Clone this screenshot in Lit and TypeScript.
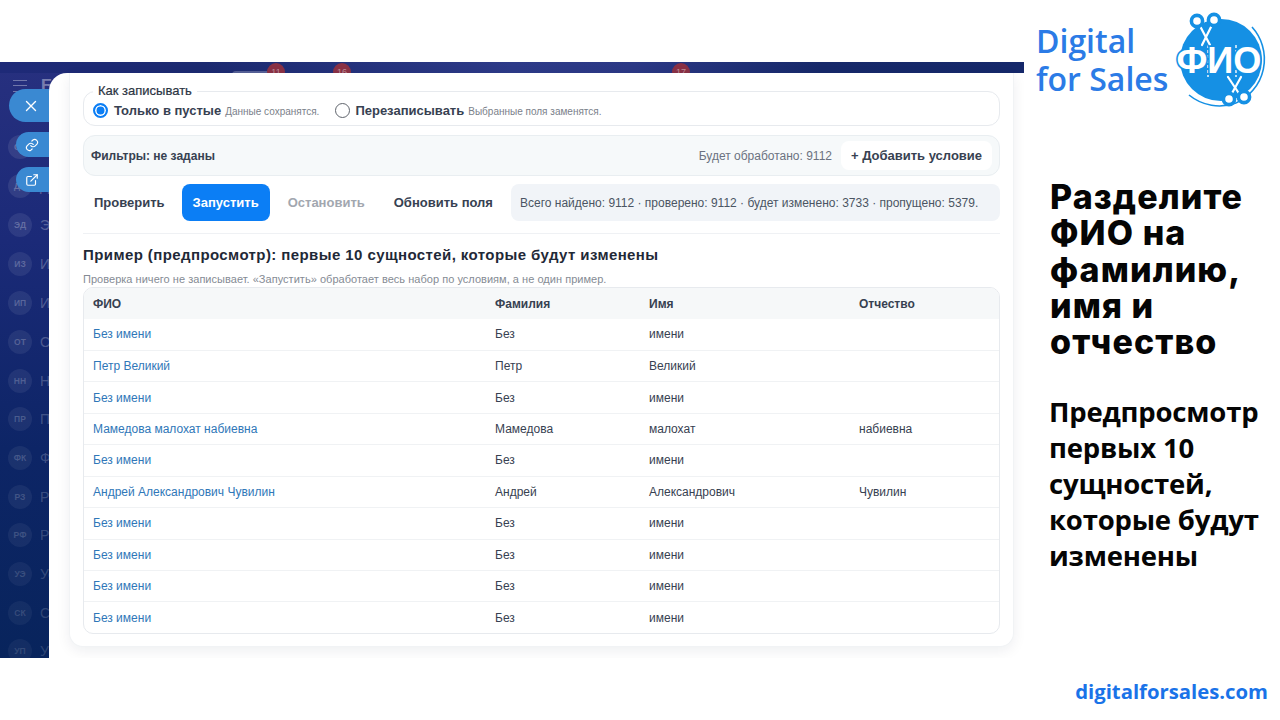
import { LitElement, html, css, svg } from 'lit';
import { customElement } from 'lit/decorators.js';

const navItems = [
  ['СД', 'Сделки', 147],
  ['ДА', 'Данные', 186],
  ['ЭД', 'Экспорт', 225],
  ['ИЗ', 'Импорт', 264],
  ['ИП', 'История', 303],
  ['ОТ', 'Отчёты', 342],
  ['НН', 'Настройки', 381],
  ['ПР', 'Проекты', 419],
  ['ФК', 'Формы', 458],
  ['РЗ', 'Разделы', 497],
  ['РФ', 'Рефералы', 535],
  ['УЭ', 'Услуги', 574],
  ['СК', 'Склад', 613],
  ['УП', 'Управление', 651],
];

const rows = [
  ['Без имени', 'Без', 'имени', ''],
  ['Петр Великий', 'Петр', 'Великий', ''],
  ['Без имени', 'Без', 'имени', ''],
  ['Мамедова малохат набиевна', 'Мамедова', 'малохат', 'набиевна'],
  ['Без имени', 'Без', 'имени', ''],
  ['Андрей Александрович Чувилин', 'Андрей', 'Александрович', 'Чувилин'],
  ['Без имени', 'Без', 'имени', ''],
  ['Без имени', 'Без', 'имени', ''],
  ['Без имени', 'Без', 'имени', ''],
  ['Без имени', 'Без', 'имени', ''],
];

const scissors = (a: number[], b: number[], c: number[], d: number[], h1: number[], h2: number[]) => svg`
  <line x1=${a[0]} y1=${a[1]} x2=${b[0]} y2=${b[1]} stroke="#1590e4" stroke-width="5" stroke-linecap="round"/>
  <line x1=${c[0]} y1=${c[1]} x2=${d[0]} y2=${d[1]} stroke="#1590e4" stroke-width="5" stroke-linecap="round"/>
  <line x1=${a[0]} y1=${a[1]} x2=${b[0]} y2=${b[1]} stroke="#fff" stroke-width="2.2" stroke-linecap="round"/>
  <line x1=${c[0]} y1=${c[1]} x2=${d[0]} y2=${d[1]} stroke="#fff" stroke-width="2.2" stroke-linecap="round"/>
  <circle cx=${h1[0]} cy=${h1[1]} r="5.6" fill="#fff" stroke="#1590e4" stroke-width="3.6"/>
  <circle cx=${h2[0]} cy=${h2[1]} r="5.6" fill="#fff" stroke="#1590e4" stroke-width="3.6"/>
`;

@customElement('app-root')
export class AppRoot extends LitElement {
  static styles = css`
    :host {
      display: grid;
      grid-template-columns: 1024px 256px;
      width: 1280px;
      height: 720px;
      overflow: hidden;
      background: #fff;
      font-family: 'Liberation Sans', Arial, sans-serif;
    }
    .left {
      padding-top: 62px;
    }
    .shot {
      position: relative;
      height: 596px;
      overflow: hidden;
      background: linear-gradient(180deg, #27307f 0%, #1b2a78 30%, #0d2566 65%, #08245c 100%);
    }
    .strip {
      height: 11px;
      background: linear-gradient(90deg, #1e2a78 0%, #1c2a70 20%, #2d3a88 50%, #2b3885 62%, #17296a 80%, #15286a 100%);
    }
    .badge {
      position: absolute;
      top: 1px;
      width: 18px;
      height: 18px;
      border-radius: 50%;
      background: #8a3145;
      color: rgba(255, 255, 255, 0.45);
      font-size: 9px;
      line-height: 18px;
      text-align: center;
    }
    .pill {
      position: absolute;
      top: 9px;
      left: 232px;
      width: 40px;
      height: 8px;
      border-radius: 4px;
      background: rgba(255, 255, 255, 0.25);
    }
    .burger {
      position: absolute;
      left: 13px;
      top: 18px;
      width: 14px;
      height: 12px;
      border-top: 1px solid rgba(255, 255, 255, 0.35);
      border-bottom: 1px solid rgba(255, 255, 255, 0.35);
      box-sizing: border-box;
    }
    .burger::after {
      content: '';
      display: block;
      margin-top: 4px;
      height: 1px;
      background: rgba(255, 255, 255, 0.35);
    }
    .brand {
      position: absolute;
      left: 41px;
      top: 14px;
      font-size: 17px;
      font-weight: 700;
      color: rgba(255, 255, 255, 0.4);
    }
    .nav-item {
      position: absolute;
      left: 8px;
      display: flex;
      align-items: center;
      gap: 8px;
      white-space: nowrap;
    }
    .ava {
      width: 24px;
      height: 24px;
      border-radius: 50%;
      background: rgba(255, 255, 255, 0.09);
      color: rgba(255, 255, 255, 0.28);
      font-size: 8.5px;
      font-weight: 700;
      line-height: 24px;
      text-align: center;
    }
    .nav-label {
      font-size: 14px;
      color: rgba(255, 255, 255, 0.3);
    }
    .fab {
      position: absolute;
      display: flex;
      align-items: center;
      background: #3a89d2;
      color: #fff;
      box-sizing: border-box;
    }
    .fab.close {
      left: 9px;
      top: 27px;
      width: 60px;
      height: 33px;
      border-radius: 17px 0 0 17px;
      padding-left: 15px;
    }
    .fab.small {
      left: 16px;
      width: 50px;
      height: 25px;
      border-radius: 13px 0 0 13px;
      padding-left: 9px;
    }
    .sheet {
      position: absolute;
      left: 49px;
      right: 0;
      top: 11px;
      bottom: 0;
      background: #fff;
      border-radius: 18px 0 0 0;
      padding-left: 20px;
    }
    .card {
      width: 945px;
      height: 574px;
      box-sizing: border-box;
      padding: 18px 13px 0;
      background: #fff;
      border: 1px solid #f1f3f5;
      border-top: 0;
      border-radius: 0 0 14px 14px;
      box-shadow: 0 4px 14px rgba(20, 30, 50, 0.07);
    }
    .mode {
      position: relative;
      height: 35px;
      box-sizing: border-box;
      display: flex;
      align-items: center;
      padding: 4px 0 0 9px;
      border: 1px solid #e7eaee;
      border-radius: 12px;
    }
    .legend {
      position: absolute;
      left: 9px;
      top: -9px;
      padding: 0 5px;
      background: #fff;
      font-size: 13px;
      font-weight: 400;
      color: #2b3442;
      line-height: 15px;
      -webkit-text-stroke: 0.2px #2b3442;
    }
    .radio {
      width: 15px;
      height: 15px;
      box-sizing: border-box;
      border-radius: 50%;
      border: 1px solid #5f646c;
      margin-right: 5px;
      flex: none;
    }
    .radio.on {
      border: 2px solid #0b7ef5;
      background: #0b7ef5;
      box-shadow: inset 0 0 0 1.5px #fff;
      margin-right: 6px;
    }
    .opt {
      font-size: 13px;
      font-weight: 700;
      color: #374151;
    }
    .hint {
      font-size: 10px;
      color: #7b818a;
      margin-left: 4px;
      padding-top: 1px;
    }
    .opt-gap {
      width: 16px;
    }
    .filters {
      height: 41px;
      box-sizing: border-box;
      margin-top: 9px;
      display: flex;
      align-items: center;
      padding: 0 7px;
      background: #f6f9fa;
      border: 1px solid #e9eef1;
      border-radius: 12px;
    }
    .filters b {
      font-size: 12px;
      color: #374151;
    }
    .count {
      margin-left: auto;
      font-size: 12px;
      color: #6b7280;
    }
    .add {
      width: 151px;
      height: 29px;
      margin-left: 9px;
      background: #fff;
      border-radius: 8px;
      font-size: 13px;
      font-weight: 700;
      color: #374151;
      line-height: 29px;
      text-align: center;
    }
    .actions {
      height: 37px;
      margin-top: 8px;
      display: flex;
      align-items: center;
      gap: 7px;
      padding-bottom: 12px;
      border-bottom: 1px solid #eff1f4;
    }
    .btn {
      height: 37px;
      box-sizing: border-box;
      padding: 0 11px;
      font-size: 13px;
      font-weight: 700;
      line-height: 37px;
      color: #374151;
      border-radius: 8px;
      white-space: nowrap;
    }
    .btn.first {
      padding-right: 10px;
    }
    .btn.primary {
      background: #0b7ef5;
      color: #fff;
    }
    .btn.off {
      color: #a2a7af;
    }
    .status {
      flex: 1;
      height: 37px;
      padding-left: 9px;
      background: #f1f4f8;
      border-radius: 8px;
      font-size: 12px;
      line-height: 38px;
      color: #4b5563;
      white-space: nowrap;
    }
    h2 {
      margin: 12px 0 0;
      font-size: 15px;
      line-height: 18px;
      font-weight: 700;
      color: #1f2937;
      letter-spacing: 0.41px;
    }
    .note {
      margin: 9px 0 0;
      font-size: 11px;
      line-height: 13px;
      letter-spacing: 0.03px;
      color: #858b94;
    }
    .table-wrap {
      margin-top: 1px;
      border: 1px solid #e7eaee;
      border-radius: 10px;
      overflow: hidden;
    }
    table {
      width: 100%;
      border-collapse: collapse;
      table-layout: fixed;
    }
    th {
      height: 31px;
      padding: 0 9px;
      background: #f6f8f9;
      font-size: 12px;
      font-weight: 700;
      text-align: left;
      color: #374151;
    }
    td {
      height: 31.44px;
      box-sizing: border-box;
      padding: 0 9px;
      border-top: 1px solid #f0f2f4;
      font-size: 12px;
      color: #374151;
    }
    tbody tr:first-child td {
      border-top: 0;
    }
    td.link {
      color: #2f77b8;
    }
    .right {
      display: flex;
      flex-direction: column;
      padding-left: 25px;
    }
    .logo-row {
      position: relative;
      height: 112px;
    }
    .logo-text {
      position: absolute;
      left: -13px;
      top: 22px;
      font-family: 'Open Sans', 'Noto Sans', sans-serif;
      font-size: 32px;
      line-height: 38px;
      font-weight: 600;
      color: #2b7be6;
      white-space: nowrap;
    }
    .logo {
      position: absolute;
      left: 120px;
      top: 5px;
    }
    h1 {
      margin: 67px 0 0 1px;
      font-family: Inter, 'Open Sans', sans-serif;
      font-size: 34px;
      line-height: 36.3px;
      font-weight: 800;
      letter-spacing: 1.1px;
      color: #050505;
    }
    .sub {
      margin: 34px 0 0;
      font-family: 'Open Sans', 'Noto Sans', sans-serif;
      font-size: 27.5px;
      line-height: 36px;
      font-weight: 700;
      letter-spacing: -0.2px;
      color: #050505;
    }
    .url {
      margin-top: auto;
      margin-bottom: 15px;
      margin-right: 12px;
      text-align: right;
      font-family: 'Open Sans', 'Noto Sans', sans-serif;
      font-size: 20.3px;
      line-height: 28px;
      font-weight: 700;
      color: #1a73e8;
      white-space: nowrap;
    }
  `;

  private logo() {
    return html`<svg class="logo" width="105" height="105" viewBox="0 0 105 105">
      <circle cx="52" cy="55" r="41" fill="#1590e4"/>
      <path d="M83 22 A48 48 0 0 1 67 98" fill="none" stroke="#1590e4" stroke-width="1.6"/>
      <path d="M20 90 A48 48 0 0 0 67 98" fill="none" stroke="#1590e4" stroke-width="1.6"/>
      <line x1="39" y1="40" x2="39" y2="72" stroke="#fff" stroke-width="1.4" stroke-dasharray="3 2"/>
      <line x1="67" y1="40" x2="67" y2="72" stroke="#fff" stroke-width="1.4" stroke-dasharray="3 2"/>
      ${scissors([31, 21], [41, 40], [43, 20], [33, 40], [28, 16], [45, 15])}
      ${scissors([59, 72], [71, 90], [72, 72], [62, 90], [60, 94], [75, 92])}
      <text x="50" y="68" text-anchor="middle" font-family="Liberation Sans, Arial, sans-serif" font-weight="700"
        font-size="37" fill="#fff" stroke="#1590e4" stroke-width="3.4" paint-order="stroke" textLength="85"
        lengthAdjust="spacingAndGlyphs">ФИО</text>
    </svg>`;
  }

  render() {
    return html`
      <div class="left">
        <div class="shot">
          <div class="strip"></div>
          <div class="pill"></div>
          <span class="badge" style="left:267px">11</span>
          <span class="badge" style="left:333px">16</span>
          <span class="badge" style="left:672px">17</span>
          <div class="burger"></div>
          <div class="brand">Б</div>
          ${navItems.map(
            ([short, label, y]) => html`<div
              class="nav-item"
              style="top:${(y as number) - 74}px;opacity:${1 - (((y as number) - 147) / 504) * 0.5}"
            >
              <span class="ava">${short}</span><span class="nav-label">${label}</span>
            </div>`
          )}
          <div class="fab close">
            <svg width="14" height="14" viewBox="0 0 14 14" fill="none" stroke="#fff" stroke-width="1.4" stroke-linecap="round"><path d="M2.5 2.5l9 9M11.5 2.5l-9 9"/></svg>
          </div>
          <div class="fab small" style="top:70px">
            <svg width="14" height="14" viewBox="0 0 24 24" fill="none" stroke="#fff" stroke-width="2" stroke-linecap="round" stroke-linejoin="round"><path d="M10 13a5 5 0 0 0 7.5.5l3-3a5 5 0 0 0-7-7l-1.7 1.7"/><path d="M14 11a5 5 0 0 0-7.5-.5l-3 3a5 5 0 0 0 7 7l1.7-1.7"/></svg>
          </div>
          <div class="fab small" style="top:105px">
            <svg width="14" height="14" viewBox="0 0 24 24" fill="none" stroke="#fff" stroke-width="2" stroke-linecap="round" stroke-linejoin="round"><path d="M18 13v6a2 2 0 0 1-2 2H5a2 2 0 0 1-2-2V8a2 2 0 0 1 2-2h6"/><path d="M15 3h6v6"/><path d="M10 14L21 3"/></svg>
          </div>
          <div class="sheet">
            <div class="card">
              <div class="mode">
                <span class="legend">Как записывать</span>
                <span class="radio on"></span>
                <span class="opt">Только в пустые</span>
                <span class="hint">Данные сохранятся.</span>
                <span class="opt-gap"></span>
                <span class="radio"></span>
                <span class="opt">Перезаписывать</span>
                <span class="hint">Выбранные поля заменятся.</span>
              </div>
              <div class="filters">
                <b>Фильтры: не заданы</b>
                <span class="count">Будет обработано: 9112</span>
                <span class="add">+ Добавить условие</span>
              </div>
              <div class="actions">
                <span class="btn first">Проверить</span>
                <span class="btn primary">Запустить</span>
                <span class="btn off">Остановить</span>
                <span class="btn">Обновить поля</span>
                <span class="status">Всего найдено: 9112 · проверено: 9112 · будет изменено: 3733 · пропущено: 5379.</span>
              </div>
              <h2>Пример (предпросмотр): первые 10 сущностей, которые будут изменены</h2>
              <p class="note">Проверка ничего не записывает. «Запустить» обработает весь набор по условиям, а не один пример.</p>
              <div class="table-wrap">
                <table>
                  <colgroup>
                    <col style="width:402px" />
                    <col style="width:154px" />
                    <col style="width:210px" />
                    <col />
                  </colgroup>
                  <thead>
                    <tr><th>ФИО</th><th>Фамилия</th><th>Имя</th><th>Отчество</th></tr>
                  </thead>
                  <tbody>
                    ${rows.map(
                      (r) => html`<tr>
                        <td class="link">${r[0]}</td>
                        <td>${r[1]}</td>
                        <td>${r[2]}</td>
                        <td>${r[3]}</td>
                      </tr>`
                    )}
                  </tbody>
                </table>
              </div>
            </div>
          </div>
        </div>
      </div>
      <div class="right">
        <div class="logo-row">
          <div class="logo-text">Digital<br />for Sales</div>
          ${this.logo()}
        </div>
        <h1>Разделите ФИО на фамилию, имя и отчество</h1>
        <div class="sub">Предпросмотр первых 10 сущностей, которые будут изменены</div>
        <div class="url">digitalforsales.com</div>
      </div>
    `;
  }
}
